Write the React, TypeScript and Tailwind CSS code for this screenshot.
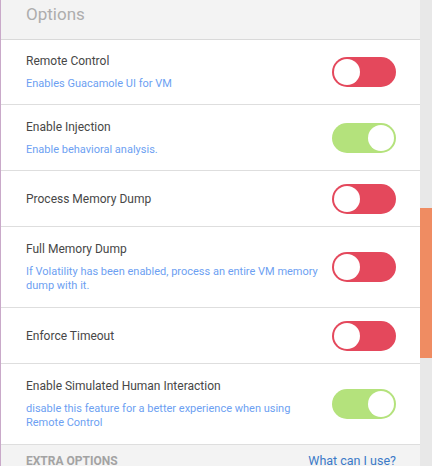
const options = [
  { title: "Remote Control", desc: "Enables Guacamole UI for VM", on: false, h: "h-[65px]" },
  { title: "Enable Injection", desc: "Enable behavioral analysis.", on: true, h: "h-[66px]" },
  { title: "Process Memory Dump", desc: "", on: false, h: "h-[56px]" },
  {
    title: "Full Memory Dump",
    desc: "If Volatility has been enabled, process an entire VM memory dump with it.",
    on: false,
    h: "h-[81px]",
  },
  { title: "Enforce Timeout", desc: "", on: false, h: "h-[56px]" },
  {
    title: "Enable Simulated Human Interaction",
    desc: "disable this feature for a better experience when using Remote Control",
    on: true,
    h: "h-[81px]",
  },
];

const Toggle = ({ on }: { on: boolean }) => (
  <div
    className={`w-16 h-[30px] rounded-full p-[2px] flex shrink-0 ${
      on ? "bg-[#b4e27c] justify-end" : "bg-[#e4485c] justify-start"
    }`}
  >
    <div className="w-[26px] h-[26px] rounded-full bg-white" />
  </div>
);

export default function App() {
  return (
    <div className="w-[432px] h-[466px] flex overflow-hidden bg-white font-['Roboto',sans-serif]">
      {/* Options panel */}
      <div className="w-[420px] flex flex-col border-l border-[#c9a9c9]">
        <div className="h-[40px] shrink-0 bg-[#f3f3f3] border-b border-[#d9d9d9] pl-[25px] flex items-center">
          <span className="text-[17px] text-[#adadad] leading-none -mt-[11px]">Options</span>
        </div>

        {options.map((o) => (
          <div
            key={o.title}
            className={`${o.h} shrink-0 border-b border-[#dedede] pl-[25px] pr-[24px] flex items-center justify-between`}
          >
            <div className="w-[302px] flex flex-col gap-[8px]">
              <div className="text-[12px] leading-[16px] text-[#474747]">{o.title}</div>
              {o.desc && (
                <div className="text-[11px] leading-[14px] text-[#6d9ff2]">{o.desc}</div>
              )}
            </div>
            <Toggle on={o.on} />
          </div>
        ))}

        <div className="flex-1 bg-[#f3f3f3] pl-[25px] pr-[24px] pt-[9px] flex justify-between items-start">
          <span className="text-[12px] leading-[14px] font-bold text-[#a3a3a3] uppercase">Extra Options</span>
          <span className="text-[12.5px] leading-[14px] text-[#3b7ac8]">What can I use?</span>
        </div>
      </div>

      {/* Scrollbar */}
      <div className="w-3 bg-[#e8e8e8] pt-[208px]">
        <div className="h-[150px] bg-[#ef8c62]" />
      </div>
    </div>
  );
}
